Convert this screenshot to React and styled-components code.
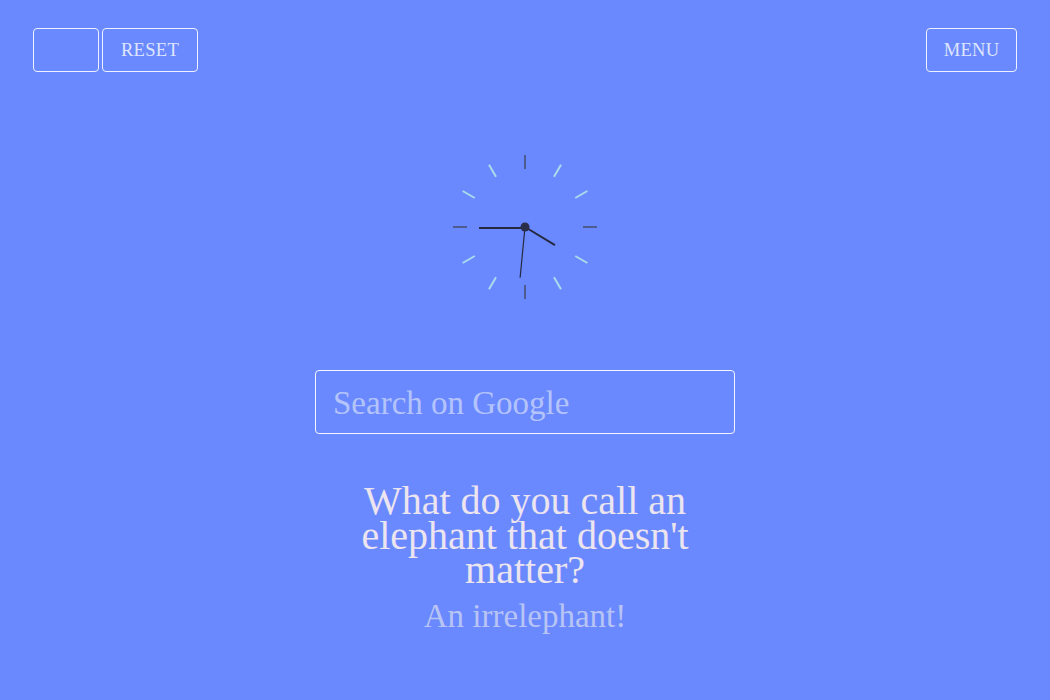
import styled, { createGlobalStyle } from "styled-components";

const GlobalStyle = createGlobalStyle`
  html, body {
    margin: 0;
    padding: 0;
    background: #6a89ff;
  }
  body {
    font-family: "Liberation Serif", "DejaVu Serif", serif;
  }
`;

const Page = styled.main`
  width: 1050px;
  height: 700px;
  box-sizing: border-box;
  padding: 28px 33px 0;
  display: flex;
  flex-direction: column;
  align-items: center;
  background: #6a89ff;
  overflow: hidden;
`;

const TopBar = styled.header`
  align-self: stretch;
  display: flex;
  justify-content: space-between;
`;

const ButtonGroup = styled.div`
  display: flex;
  gap: 3px;
`;

const Button = styled.button`
  height: 44px;
  width: ${(p) => p.$width}px;
  box-sizing: border-box;
  border: 1px solid #eef1ff;
  border-radius: 4px;
  background: transparent;
  color: #dfe5fd;
  font-family: "Liberation Serif", serif;
  font-size: 18.5px;
  letter-spacing: 0.3px;
  text-transform: uppercase;
  padding: 1px 0 0;
  cursor: pointer;
`;

const ClockWrap = styled.div`
  margin-top: 80px;
  width: 150px;
  height: 150px;
`;

const SearchInput = styled.input`
  margin-top: 68px;
  width: 420px;
  height: 64px;
  box-sizing: border-box;
  border: 1px solid #f4f6ff;
  border-radius: 4px;
  background: transparent;
  padding: 2px 17px 0;
  font-family: "Liberation Serif", serif;
  font-size: 33px;
  color: #ffffff;
  outline: none;
  &::placeholder {
    color: #b4c4fb;
  }
`;

const Joke = styled.section`
  margin-top: 50px;
  width: 380px;
  text-align: center;
`;

const Question = styled.h2`
  margin: 0;
  font-weight: normal;
  font-size: 40px;
  line-height: 34.5px;
  color: #ece4ee;
`;

const Answer = styled.p`
  margin: 10px 0 0;
  font-size: 33px;
  line-height: 36px;
  color: #b8c4f4;
`;

const Clock = () => {
  const ticks = Array.from({ length: 12 }, (_, i) => i * 30);
  const hand = (deg, len) => {
    const r = (deg * Math.PI) / 180;
    return { x2: 75 + Math.sin(r) * len, y2: 75 - Math.cos(r) * len };
  };
  return (
    <svg width="150" height="150" viewBox="0 0 150 150">
      {ticks.map((d) => {
        const major = d % 90 === 0;
        return (
          <line
            key={d}
            x1="75"
            y1="3"
            x2="75"
            y2="17"
            stroke={major ? "#4d5c8e" : "#a8dcea"}
            strokeWidth="2"
            transform={`rotate(${d} 75 75)`}
          />
        );
      })}
      <line x1="75" y1="75" {...hand(121, 35)} stroke="#262a40" strokeWidth="2" />
      <line x1="75" y1="76" x2="29" y2="76" stroke="#262a40" strokeWidth="2" />
      <line x1="75" y1="75" {...hand(185.5, 51)} stroke="#262a40" strokeWidth="1.2" />
      <circle cx="75" cy="75" r="4.5" fill="#2b2e48" />
    </svg>
  );
};

const App = () => {
  return (
    <Page>
      <GlobalStyle />
      <TopBar>
        <ButtonGroup>
          <Button $width={66} aria-label="toggle" />
          <Button $width={96}>Reset</Button>
        </ButtonGroup>
        <Button $width={91}>Menu</Button>
      </TopBar>

      <ClockWrap>
        <Clock />
      </ClockWrap>

      <SearchInput placeholder="Search on Google" />

      <Joke>
        <Question>What do you call an elephant that doesn't matter?</Question>
        <Answer>An irrelephant!</Answer>
      </Joke>
    </Page>
  );
};

export default App;
